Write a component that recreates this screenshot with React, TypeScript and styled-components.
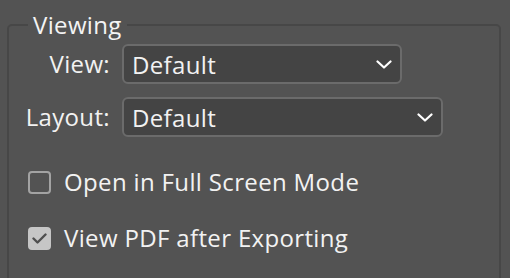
import React from "react";
import styled, { createGlobalStyle } from "styled-components";

const Global = createGlobalStyle`
  html, body { margin: 0; padding: 0; background: #535353; }
  body {
    font-family: "Open Sans", "Liberation Sans", sans-serif;
    font-weight: 500;
    letter-spacing: 0.35px;
    color: #f2f2f2;
  }
`;

const Page = styled.div`
  width: 510px;
  height: 278px;
  overflow: hidden;
  padding: 10px 0 0 7px;
  box-sizing: border-box;
`;

const Group = styled.fieldset`
  margin: 0;
  width: 494px;
  height: 280px;
  box-sizing: border-box;
  border: 2px solid #474747;
  border-radius: 5px;
  padding: 0 0 0 19px;
`;

const Legend = styled.legend`
  font-size: 24px;
  line-height: 30px;
  padding: 0 5px;
  margin-left: 0;
  color: #f4f4f4;
`;

const Form = styled.div`
  display: grid;
  grid-template-columns: 82px auto;
  column-gap: 12px;
  row-gap: 13px;
  align-items: center;
  justify-items: start;
  margin-top: 4px;
`;

const Label = styled.span`
  justify-self: end;
  font-size: 24px;
  line-height: 30px;
  white-space: nowrap;
`;

const Select = styled.div<{ $w: number }>`
  width: ${(p) => p.$w}px;
  height: 40px;
  box-sizing: border-box;
  border: 2px solid #6b6b6b;
  border-radius: 6px;
  background: #444444;
  display: flex;
  align-items: center;
  justify-content: space-between;
  padding: 0 8px 0 8px;
  font-size: 24px;
`;

const Chevron = () => (
  <svg width="16" height="9" viewBox="0 0 16 9" fill="none">
    <polyline points="1.5,1.5 8,7.5 14.5,1.5" stroke="#ffffff" strokeWidth="2.2" strokeLinecap="round" strokeLinejoin="round" />
  </svg>
);

const Checks = styled.div`
  display: flex;
  flex-direction: column;
  gap: 28px;
  margin-top: 31px;
`;

const CheckRow = styled.label`
  display: flex;
  align-items: center;
  gap: 13px;
  font-size: 24px;
  line-height: 28px;
`;

const Box = styled.span<{ $on?: boolean }>`
  width: 23px;
  height: 23px;
  box-sizing: border-box;
  border-radius: 4px;
  border: 2px solid ${(p) => (p.$on ? "#c6c6c6" : "#a3a3a3")};
  background: ${(p) => (p.$on ? "#c6c6c6" : "transparent")};
  display: flex;
  align-items: center;
  justify-content: center;
  flex: none;
`;

const Tick = () => (
  <svg width="15" height="11" viewBox="0 0 15 11" fill="none">
    <polyline points="1.5,5.5 5.5,9.5 13.5,1.5" stroke="#4f4f4f" strokeWidth="2.4" strokeLinecap="round" strokeLinejoin="round" />
  </svg>
);

export default function App() {
  return (
    <>
      <Global />
      <Page>
        <Group>
          <Legend>Viewing</Legend>
          <Form>
            <Label>View:</Label>
            <Select $w={280}>
              <span>Default</span>
              <Chevron />
            </Select>
            <Label>Layout:</Label>
            <Select $w={321}>
              <span>Default</span>
              <Chevron />
            </Select>
          </Form>
          <Checks>
            <CheckRow>
              <Box />
              <span>Open in Full Screen Mode</span>
            </CheckRow>
            <CheckRow>
              <Box $on>
                <Tick />
              </Box>
              <span>View PDF after Exporting</span>
            </CheckRow>
          </Checks>
        </Group>
      </Page>
    </>
  );
}
